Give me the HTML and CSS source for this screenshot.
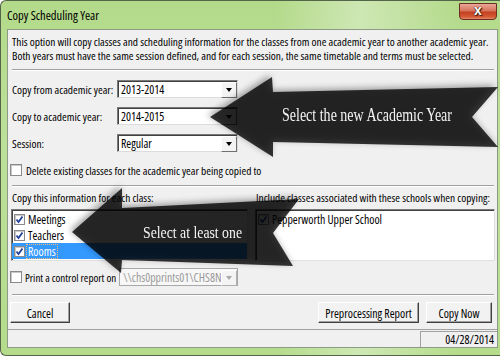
FILE: index.html
```html
<!DOCTYPE html>
<html>
<head>
<meta charset="utf-8">
<title>Copy Scheduling Year</title>
<link rel="stylesheet" href="styles.css">
</head>
<body>
<div class="window">
  <div class="titlebar">
    <span class="title">Copy Scheduling Year</span>
    <div class="close"><span>x</span></div>
  </div>
  <div class="client">
    <p class="intro">This option will copy classes and scheduling information for the classes from one academic year to another academic year.<br>Both years must have the same session defined, and for each session, the same timetable and terms must be selected.</p>
    <div class="sep"></div>
    <div class="fields">
      <div class="field">
        <span class="label">Copy from academic year:</span>
        <div class="combo"><span class="val">2013-2014</span><span class="drop"><i class="tri"></i></span></div>
      </div>
      <div class="field">
        <span class="label">Copy to academic year:</span>
        <div class="combo"><span class="val">2014-2015</span><span class="drop"><i class="tri"></i></span></div>
      </div>
      <div class="field">
        <span class="label">Session:</span>
        <div class="combo"><span class="val">Regular</span><span class="drop"><i class="tri"></i></span></div>
      </div>
    </div>
    <div class="check-row">
      <span class="cb"></span>
      <span>Delete existing classes for the academic year being copied to</span>
    </div>
    <div class="sep sep2"></div>
    <div class="lists">
      <div class="col col-left">
        <div class="cap">Copy this information for each class:</div>
        <div class="listbox">
          <div class="item"><span class="cb checked"><svg viewBox="0 0 9 9"><path d="M1.5 4.5 L3.5 7 L7.5 1.5" /></svg></span><span class="txt">Meetings</span></div>
          <div class="item"><span class="cb checked"><svg viewBox="0 0 9 9"><path d="M1.5 4.5 L3.5 7 L7.5 1.5" /></svg></span><span class="txt">Teachers</span></div>
          <div class="item sel"><span class="cb checked"><svg viewBox="0 0 9 9"><path d="M1.5 4.5 L3.5 7 L7.5 1.5" /></svg></span><span class="txt focus">Rooms</span></div>
        </div>
      </div>
      <div class="col col-right">
        <div class="cap">Include classes associated with these schools when copying:</div>
        <div class="listbox">
          <div class="item"><span class="cb checked"><svg viewBox="0 0 9 9"><path d="M1.5 4.5 L3.5 7 L7.5 1.5" /></svg></span><span class="txt">Pepperworth Upper School</span></div>
        </div>
      </div>
    </div>
    <div class="print-row">
      <span class="cb"></span>
      <span class="plabel">Print a control report on</span>
      <div class="combo disabled"><span class="val">\\chs0pprints01\CHS8N3</span><span class="drop"><i class="tri"></i></span></div>
    </div>
    <div class="sep sep3"></div>
    <div class="buttons">
      <button class="btn btn-cancel">Cancel</button>
      <div class="spacer"></div>
      <button class="btn btn-pre">Preprocessing Report</button>
      <button class="btn btn-copy">Copy Now</button>
    </div>
    <div class="status">
      <div class="panel grow"></div>
      <div class="panel date">04/28/2014</div>
    </div>
  </div>
  <svg class="arrows" width="500" height="356" viewBox="0 0 500 356">
    <polygon class="arrow" points="210,117 272,77 273,92 498,87 472,117 498,147 273,142 273,157"/>
    <text class="atext" x="282" y="121" font-size="19" textLength="170" lengthAdjust="spacingAndGlyphs">Select the new Academic Year</text>
    <polygon class="arrow" points="72,232 122,188 122,208 299,199 273,233 293,266 122,260 121,273"/>
    <text class="atext" x="143" y="238" font-size="17" textLength="99" lengthAdjust="spacingAndGlyphs">Select at least one</text>
  </svg>
</div>
</body>
</html>
```
FILE: styles.css
```css
* { box-sizing: border-box; }
html, body { margin: 0; padding: 0; background: #ffffff; }
body { width: 500px; height: 356px; overflow: hidden; }

.window {
  position: relative;
  width: 500px;
  height: 356px;
  display: flex;
  flex-direction: column;
  padding: 0 2px 7px 6px;
  border: 1px solid #55654a;
  border-right: 0;
  border-radius: 6px 0 0 6px;
  background:
    linear-gradient(to right, rgba(255,255,255,0) 0%, rgba(255,255,255,0) 55%, rgba(255,255,255,0.35) 72%, rgba(255,255,255,0) 92%),
    linear-gradient(to bottom, #b3da8a 0%, #bde09a 40%, #b4dc8b 100%);
  font-family: "Open Sans", "Liberation Sans", sans-serif;
  font-stretch: 75%;
  font-size: 11.4px;
  color: #000;
}

.titlebar {
  height: 28px;
  flex: none;
  display: flex;
  justify-content: space-between;
  align-items: flex-start;
}
.title {
  font-size: 12.5px;
  padding-top: 6px;
  color: #000;
}
.close {
  width: 38px;
  height: 17px;
  margin-top: 2px;
  margin-right: 1px;
  border: 1px solid #6b2e22;
  border-radius: 0 0 4px 4px;
  background: linear-gradient(to bottom, #e9a797 0%, #d7745d 45%, #c4401f 55%, #d45a36 85%, #e48a68 100%);
  display: flex;
  align-items: center;
  justify-content: center;
}
.close span {
  color: #fff;
  font-family: "Liberation Sans", sans-serif;
  font-stretch: 100%;
  font-weight: bold;
  font-size: 14px;
  line-height: 13px;
  margin-top: -2px;
  text-shadow: 0 0 1px #3a1208, 0 0 1px #3a1208, 1px 1px 1px #3a1208;
}

.client {
  flex: 1;
  background: #f0f0f0;
  border: 1px solid #8d9a85;
  display: flex;
  flex-direction: column;
  padding: 0 3px 0 4px;
}

.intro {
  margin: 5px 0 0;
  line-height: 14px;
  white-space: nowrap;
}

.sep {
  height: 2px;
  border-top: 1px solid #a0a0a0;
  border-bottom: 1px solid #ffffff;
  margin-top: 6px;
  flex: none;
}
.sep2 { margin-top: 8px; }
.sep3 { margin-top: 8px; }

.fields {
  margin-top: 9px;
  display: flex;
  flex-direction: column;
  gap: 9px;
}
.field {
  display: flex;
  align-items: center;
  height: 18px;
}
.label { width: 105px; flex: none; white-space: nowrap; }

.combo {
  width: 121px;
  height: 18px;
  background: #fff;
  border: 1px solid;
  border-color: #7a7a7a #dcdcdc #dcdcdc #7a7a7a;
  box-shadow: inset 1px 1px 0 #404040;
  display: flex;
  align-items: center;
  padding-left: 3px;
}
.combo .val { flex: 1; white-space: nowrap; overflow: hidden; font-size: 11.8px; }
.drop {
  width: 16px;
  height: 16px;
  flex: none;
  margin-top: 1px;
  background: #f4f4f4;
  border: 1px solid;
  border-color: #fff #707070 #707070 #fff;
  display: flex;
  align-items: center;
  justify-content: center;
}
.tri {
  width: 0; height: 0;
  border-left: 3px solid transparent;
  border-right: 3px solid transparent;
  border-top: 4px solid #000;
}

.cb {
  width: 12px;
  height: 12px;
  flex: none;
  background: #fff;
  border: 1px solid #8a8a8a;
  box-shadow: inset 1px 1px 0 #c8c8c8;
  display: flex;
  align-items: center;
  justify-content: center;
}
.cb svg { width: 9px; height: 9px; }
.cb svg path { fill: none; stroke: #22409a; stroke-width: 1.8; }

.check-row {
  margin-top: 11px;
  height: 14px;
  display: flex;
  align-items: center;
  gap: 4px;
  margin-left: -2px;
  white-space: nowrap;
}

.lists {
  margin: 4px -1px 0;
  display: flex;
  gap: 7px;
}
.col { display: flex; flex-direction: column; }
.col-left { width: 237px; }
.col-right { width: 240px; }
.cap { height: 14px; line-height: 14px; padding-left: 1px; white-space: nowrap; margin-bottom: 4px; }
.listbox {
  height: 52px;
  background: #fff;
  border: 1px solid;
  border-color: #7a7a7a #e0e0e0 #e0e0e0 #7a7a7a;
  box-shadow: inset 1px 1px 0 #404040;
  padding-top: 1px;
}
.item {
  height: 16px;
  display: flex;
  align-items: center;
  padding-left: 2px;
  font-size: 11.8px;
  white-space: nowrap;
}
.item .cb { width: 11px; height: 11px; margin-right: 2px; }
.item.sel { background: #3399ff; color: #fff; }
.txt { padding: 0 1px; line-height: 13px; }
.focus { outline: 1px dotted #f0c080; }

.print-row {
  margin-top: 7px;
  height: 18px;
  display: flex;
  align-items: center;
  margin-left: -2px;
}
.plabel { margin: 0 3px 0 3px; font-size: 11px; white-space: nowrap; }
.combo.disabled {
  width: 119px;
  background: #f7f7f7;
  border-color: #a8a8a8;
  box-shadow: none;
  color: #9a9a9a;
}
.combo.disabled .drop { border-color: #fff #b0b0b0 #b0b0b0 #fff; }
.combo.disabled .tri { border-top-color: #a8a8a8; }

.buttons {
  margin-top: 6px;
  display: flex;
  margin-left: -2px;
  margin-right: 2px;
  gap: 7px;
}
.spacer { flex: 1; }
.btn {
  height: 21px;
  font: inherit;
  font-stretch: 75%;
  font-size: 11.8px;
  white-space: nowrap;
  background: #f2f2f2;
  border: 1px solid;
  border-color: #ffffff #404040 #404040 #ffffff;
  box-shadow: inset -1px -1px 0 #a0a0a0;
  padding: 0;
  color: #000;
}
.btn-cancel { width: 60px; }
.btn-pre { width: 101px; }
.btn-copy { width: 66px; }

.status {
  margin: auto -3px 0 -4px;
  height: 18px;
  border-top: 1px solid #a0a0a0;
  display: flex;
}
.panel {
  border-top: 1px solid #a0a0a0;
  border-left: 1px solid #a0a0a0;
  margin-top: 1px;
  height: 16px;
}
.panel.grow { flex: 1; border: 0; }
.date {
  width: 77px;
  text-align: right;
  padding-right: 3px;
  line-height: 15px;
  font-size: 11.8px;
}

.arrows {
  position: absolute;
  left: -1px;
  top: -1px;
  pointer-events: none;
  filter: drop-shadow(-2px -2px 3px rgba(0,0,0,0.45));
}
.arrow { fill: rgba(0,0,0,0.78); }
.atext { fill: #f4f4f4; font-family: "Liberation Serif", "Times New Roman", serif; font-stretch: 100%; }
```
